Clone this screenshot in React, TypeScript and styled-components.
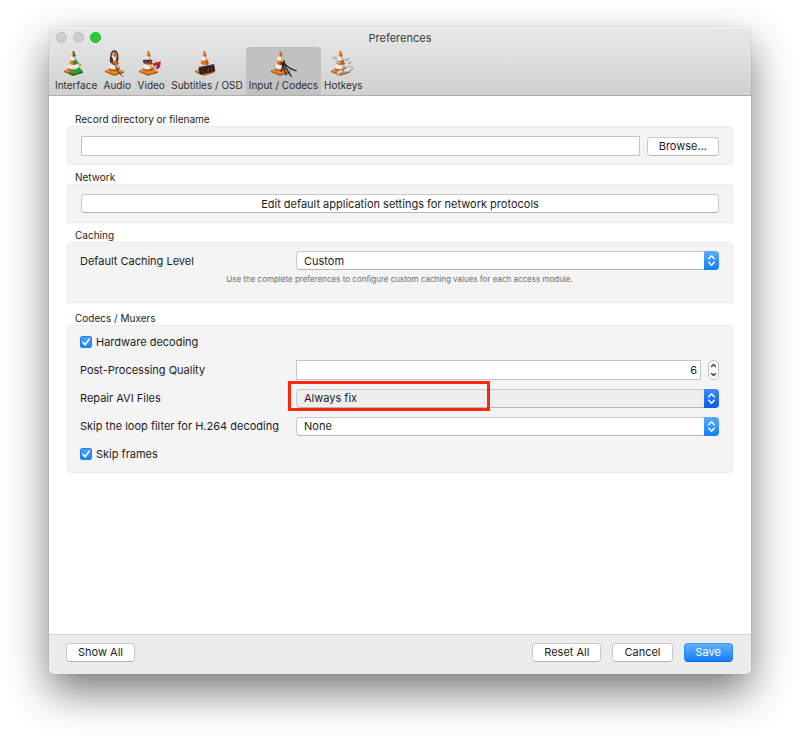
import React, { useState } from "react";
import styled, { createGlobalStyle, css } from "styled-components";

const GlobalStyle = createGlobalStyle`
  *, *::before, *::after { box-sizing: border-box; }
  body { margin: 0; background: #fff; }
  button, input, select { font: inherit; color: inherit; margin: 0; }
`;

const Page = styled.div`
  display: flex;
  min-height: 100vh;
  padding: 27px 49px 70px;
  font-family: Inter, "Liberation Sans", sans-serif;
  font-size: 11px;
  line-height: 14px;
  color: #1c1c1c;
`;

const Window = styled.main`
  flex: 1;
  min-width: 0;
  display: flex;
  flex-direction: column;
  border-radius: 5px;
  background: #fff;
  box-shadow: 0 0 1px rgba(0, 0, 0, 0.45), 0 18px 42px rgba(0, 0, 0, 0.52);
`;

const Header = styled.header`
  border-bottom: 1px solid #aeaeae;
  border-radius: 5px 5px 0 0;
  background: linear-gradient(#e9e9e9, #d0d0d0);
  box-shadow: inset 0 1px #f5f5f5;
`;

const TitleBar = styled.div`
  display: grid;
  grid-template-columns: 1fr auto 1fr;
  align-items: center;
  height: 20px;
  padding: 1px 7px 0;
`;

const Lights = styled.div`
  display: flex;
  gap: 6px;
`;

const Light = styled.button<{ $on?: boolean }>`
  width: 11px;
  height: 11px;
  padding: 0;
  border-radius: 50%;
  border: 1px solid ${(p) => (p.$on ? "#20b032" : "#bdbdbd")};
  background: ${(p) => (p.$on ? "#28cb3d" : "#cecece")};
`;

const Title = styled.h1`
  margin: 0;
  font-size: 11px;
  font-weight: 400;
  color: #3a3a3a;
`;

const Toolbar = styled.nav`
  display: flex;
  height: 48px;
  padding-left: 3px;
`;

const Tool = styled.button<{ $active?: boolean }>`
  display: flex;
  flex-direction: column;
  align-items: center;
  padding: 1px 3px 0;
  border: 0;
  border-radius: 4px 4px 0 0;
  background: ${(p) => (p.$active ? "#c1c1c1" : "transparent")};
  font-size: 10px;
  line-height: 16px;
  white-space: nowrap;
  color: #2c2c2c;
  svg { display: block; flex: none; }
`;

const Content = styled.div`
  flex: 1;
  padding: 17px 18px;
`;

const Group = styled.fieldset<{ $gap: number }>`
  min-width: 0;
  margin: 0 0 ${(p) => p.$gap}px;
  padding: 0;
  border: 0;
`;

const Legend = styled.legend`
  padding: 0 8px;
  font-size: 10px;
  line-height: 13px;
`;

const Panel = styled.div<{ $pad: string }>`
  border: 1px solid #ebebeb;
  border-radius: 3px;
  background: #f4f4f4;
  padding: ${(p) => p.$pad};
`;

const Line = styled.div`
  display: flex;
  align-items: center;
  gap: 7px;
`;

const FormRow = styled.div<{ $height: number }>`
  position: relative;
  display: grid;
  grid-template-columns: 216px minmax(0, 1fr);
  align-items: center;
  height: ${(p) => p.$height}px;
`;

const field = css`
  flex: 1;
  min-width: 0;
  height: 20px;
  border: 1px solid #c4c4c4;
  background: #fff;
  outline: 0;
`;

const TextField = styled.input`
  ${field}
  padding: 0 4px;
`;

const NumberField = styled.input`
  ${field}
  padding: 0 3px;
  text-align: right;
`;

const Button = styled.button<{ $primary?: boolean; $wide?: boolean }>`
  height: 19px;
  padding: 0 11px;
  border: 1px solid #c9c9c9;
  border-bottom-color: #b5b5b5;
  border-radius: 4px;
  background: #fff;
  line-height: 16px;
  white-space: nowrap;
  ${(p) => p.$wide && "flex: 1;"}
  ${(p) =>
    p.$primary &&
    css`
      border-color: #3c94f5 #2a86f0 #0f6be0;
      background: linear-gradient(#62b0fb, #157efb);
      color: #fff;
    `}
`;

const SelectBox = styled.div<{ $pressed?: boolean }>`
  display: flex;
  position: relative;
  height: 19px;
  border: 1px solid #c9c9c9;
  border-bottom-color: #b5b5b5;
  border-radius: 4px;
  background: ${(p) => (p.$pressed ? "#eeeeee" : "#fff")};
  select {
    flex: 1;
    min-width: 0;
    appearance: none;
    border: 0;
    outline: 0;
    padding: 0 20px 0 7px;
    background: transparent;
    line-height: 16px;
  }
`;

const Arrows = styled.span<{ $pressed?: boolean }>`
  position: absolute;
  top: -1px;
  right: -1px;
  bottom: -1px;
  width: 15px;
  display: grid;
  place-items: center;
  border-radius: 0 4px 4px 0;
  pointer-events: none;
  background: ${(p) =>
    p.$pressed
      ? "linear-gradient(#3a8cf5, #0a5ce8)"
      : "linear-gradient(#5aabfb, #157efb)"};
`;

const Hint = styled.p`
  margin: 3px 0 0;
  font-size: 8px;
  line-height: 12px;
  text-align: center;
  color: #6e6e6e;
`;

const CheckLabel = styled.label`
  display: flex;
  align-items: center;
  gap: 4px;
  height: 28px;
`;

const CheckFrame = styled.span`
  display: grid;
  width: 12px;
  height: 12px;
  > * { grid-area: 1 / 1; pointer-events: none; }
  input {
    appearance: none;
    pointer-events: auto;
    width: 12px;
    height: 12px;
    border: 1px solid #bdbdbd;
    border-radius: 2px;
    background: #fff;
  }
  input:checked {
    border-color: #2382f3;
    background: linear-gradient(#4ca2fb, #1c80fa);
  }
  input:not(:checked) + svg { display: none; }
`;

const Stepper = styled.div`
  display: flex;
  flex-direction: column;
  width: 11px;
  height: 20px;
  border: 1px solid #c2c2c2;
  border-radius: 5px;
  background: #fff;
  button {
    flex: 1;
    display: grid;
    place-items: center;
    min-height: 0;
    padding: 0;
    border: 0;
    background: transparent;
  }
`;

const Highlight = styled.div`
  position: absolute;
  left: 208px;
  top: -3px;
  width: 202px;
  height: 30px;
  border: 3px solid #fb2a0e;
  pointer-events: none;
`;

const Footer = styled.footer`
  display: flex;
  align-items: center;
  gap: 11px;
  height: 40px;
  padding: 0 18px 5px 17px;
  border-top: 1px solid #cfcfcf;
  border-radius: 0 0 5px 5px;
  background: #ececec;
`;

const Spacer = styled.div`
  flex: 1;
`;

type Kind = "interface" | "audio" | "video" | "subtitles" | "input" | "hotkeys";

const extras: Record<Kind, React.ReactNode> = {
  interface: (
    <>
      <path d="M37 9h2l5 15-7 3z" fill="#147a28" />
      <path d="M37 39l10-4 4 12-14 5z" fill="#1c9434" />
      <path d="M37 58l14-4 15 16-30 9-12-6 13-6z" fill="#1ea534" />
      <path d="M24 73l12 6 30-9v4l-30 9-12-6z" fill="#0b6d1b" />
      <path d="M37 52l14-4 2 9c-4 6-10 8-16 7z" fill="#e4ece5" />
      <path d="M50 43l14 8-6-1 4 8-8-7z" fill="#f07d20" />
    </>
  ),
  audio: (
    <>
      <path d="M27 36C22 0 50 0 47 32" fill="none" stroke="#26262c" strokeWidth="4" />
      <path d="M29 22C31 10 42 10 44 20" fill="none" stroke="#888893" strokeWidth="2" />
      <ellipse cx="28" cy="36" rx="5" ry="8" fill="#1d1d22" />
      <ellipse cx="28" cy="36" rx="2" ry="4" fill="#5a5a64" />
      <ellipse cx="46" cy="34" rx="3" ry="7" fill="#35353d" />
      <path d="M29 44q8 4 11 8l8 18 14 16" fill="none" stroke="#38383e" strokeWidth="3" />
    </>
  ),
  video: (
    <>
      <path d="M21 36q14-4 29 1l-1 9-10 1-4-4-4 4-9-2z" fill="#4a2024" />
      <path d="M25 38l8-1-1 6-6 1z" fill="#3c5fa8" />
      <path d="M39 38l8 1-1 6-7-1z" fill="#cf3a2a" />
      <path d="M49 37l9-4 4 5 11-2 1 6-18 6-7-3z" fill="#d6d2da" />
      <path d="M50 47l13-5 11-3-1 15-6 9-13-2z" fill="#c91f2c" />
      <path d="M51 52l6 8 5-8M65 42l6-4" fill="none" stroke="#fff" strokeWidth="3" />
      <path d="M63 50l6 3-5 7" fill="none" stroke="#5a1d4b" strokeWidth="3" />
    </>
  ),
  subtitles: (
    <>
      <path d="M20 57l46-8 4 21-47 10z" fill="#211a1c" />
      <path d="M20 57l46-8 1 3-46 9z" fill="#5c5454" />
      <path d="M28 65l3 10M37 63l-4 1 2 9 4-1M44 61l2 10M52 60l-4 1 2 9 4-1M60 58l-4 1 1 5 5-1 1 5-5 1" fill="none" stroke="#92342e" strokeWidth="2.4" />
    </>
  ),
  input: (
    <>
      <path d="M41 41c5 12 3 21-3 30M43 40c8 14 2 28 13 42M45 41c10 11 9 28 26 45M45 42c13 14 18 20 41 27" fill="none" stroke="#211d1d" strokeWidth="3.6" />
      <path d="M48 50c9 12 11 15 20 19" fill="none" stroke="#77706c" strokeWidth="1.5" />
      <path d="M36 43l3 8" stroke="#d11a25" strokeWidth="5" />
      <path d="M42 34l2 8" stroke="#f3c414" strokeWidth="5" />
      <path d="M48 37l1 8" stroke="#353336" strokeWidth="5" />
    </>
  ),
  hotkeys: (
    <>
      <path d="M12 27l9-1 7 6-8 1zM48 31l7 4 8-5-5 8-7-2zM24 43l11-2 5 4-9 3zM56 43l6 2 8-4-6 7z" fill="#a5a5a6" stroke="#707071" strokeWidth="1" />
      <path d="M14 27l7 1M49 31l6 4M27 44l8-2M57 43l5 2" stroke="#fff" strokeWidth="2" />
      <path d="M27 72l12-7 9 3-8 6-11 9-4-4zM42 66l13-5 6-7 13 5-2 8-11 6-15 1z" fill="#bdbdbd" stroke="#808080" strokeWidth="1.5" />
      <path d="M28 72l11-5 4 2-9 5zM46 67l11-4 5-6 8 3-5 4-10 5z" fill="#efefef" />
    </>
  ),
};

const ConeIcon = ({ kind }: { kind: Kind }) => (
  <svg width="28" height="29" viewBox="3 0 84 87" aria-hidden="true">
    <path d="M9 68l27-12 30 14-30 9z" fill="#e8842a" />
    <path d="M9 68l27 11 30-9v4l-30 9L9 72z" fill="#a64e0a" />
    <path d="M35 9h4l14 50c-3 10-25 12-32 3z" fill="#eeece6" />
    <path d="M35 9h4l5 15q-7 4-13 0z" fill="#dc741a" />
    <path d="M28 36q9 5 19-1l4 12q-13 8-26 1z" fill="#dc741a" />
    <path d="M21 60q15 8 32-2l1 5c-3 9-26 11-34 2z" fill="#c9640f" />
    <path d="M38 9h1l14 50q-4 8-11 9z" fill="#743500" opacity=".3" />
    <path d="M35 14L25 58" stroke="#fff" strokeWidth="2.5" opacity=".4" />
    {extras[kind]}
  </svg>
);

const UpDown = () => (
  <svg width="9" height="13" viewBox="0 0 9 13" fill="none" stroke="#fff" strokeWidth="1.4" strokeLinecap="round" strokeLinejoin="round" aria-hidden="true">
    <path d="M1.8 4.8l2.7-3 2.7 3M1.8 8.2l2.7 3 2.7-3" />
  </svg>
);

const Chevron = ({ down }: { down?: boolean }) => (
  <svg width="7" height="5" viewBox="0 0 7 5" fill="none" stroke="#3b3b3b" strokeWidth="1.3" strokeLinecap="round" aria-hidden="true">
    <path d={down ? "M1.5 1.5l2 2 2-2" : "M1.5 3.5l2-2 2 2"} />
  </svg>
);

const PopUp = ({ id, value, options, pressed }: { id: string; value: string; options: string[]; pressed?: boolean }) => (
  <SelectBox $pressed={pressed}>
    <select id={id} defaultValue={value}>
      {options.map((o) => (
        <option key={o}>{o}</option>
      ))}
    </select>
    <Arrows $pressed={pressed}>
      <UpDown />
    </Arrows>
  </SelectBox>
);

const Check = ({ children }: { children: React.ReactNode }) => (
  <CheckLabel>
    <CheckFrame>
      <input type="checkbox" defaultChecked />
      <svg width="12" height="12" viewBox="0 0 12 12" fill="none" stroke="#fff" strokeWidth="1.6" strokeLinecap="round" strokeLinejoin="round" aria-hidden="true">
        <path d="M3 6.4l2.2 2.5L9 3.2" />
      </svg>
    </CheckFrame>
    {children}
  </CheckLabel>
);

const tools: { kind: Kind; label: string }[] = [
  { kind: "interface", label: "Interface" },
  { kind: "audio", label: "Audio" },
  { kind: "video", label: "Video" },
  { kind: "subtitles", label: "Subtitles / OSD" },
  { kind: "input", label: "Input / Codecs" },
  { kind: "hotkeys", label: "Hotkeys" },
];

export default function App() {
  const [active, setActive] = useState<Kind>("input");
  const [quality, setQuality] = useState(6);

  return (
    <>
      <GlobalStyle />
      <Page>
        <Window>
          <Header>
            <TitleBar>
              <Lights>
                <Light aria-label="Close" />
                <Light aria-label="Minimize" />
                <Light aria-label="Zoom" $on />
              </Lights>
              <Title>Preferences</Title>
            </TitleBar>
            <Toolbar>
              {tools.map((t) => (
                <Tool key={t.kind} $active={t.kind === active} onClick={() => setActive(t.kind)}>
                  <ConeIcon kind={t.kind} />
                  {t.label}
                </Tool>
              ))}
            </Toolbar>
          </Header>

          <Content>
            <Group $gap={6}>
              <Legend>Record directory or filename</Legend>
              <Panel $pad="9px 13px 8px">
                <Line>
                  <TextField aria-label="Record directory or filename" />
                  <Button>Browse...</Button>
                </Line>
              </Panel>
            </Group>

            <Group $gap={6}>
              <Legend>Network</Legend>
              <Panel $pad="9px 13px 9px">
                <Line>
                  <Button $wide>Edit default application settings for network protocols</Button>
                </Line>
              </Panel>
            </Group>

            <Group $gap={9}>
              <Legend>Caching</Legend>
              <Panel $pad="8px 13px 17px 12px">
                <FormRow $height={19}>
                  <label htmlFor="caching">Default Caching Level</label>
                  <PopUp id="caching" value="Custom" options={["Custom", "Lowest latency", "Normal"]} />
                </FormRow>
                <Hint>Use the complete preferences to configure custom caching values for each access module.</Hint>
              </Panel>
            </Group>

            <Group $gap={0}>
              <Legend>Codecs / Muxers</Legend>
              <Panel $pad="2px 13px 4px 12px">
                <Check>Hardware decoding</Check>
                <FormRow $height={28}>
                  <label htmlFor="quality">Post-Processing Quality</label>
                  <Line>
                    <NumberField
                      id="quality"
                      inputMode="numeric"
                      value={quality}
                      onChange={(e) => setQuality(Number(e.target.value) || 0)}
                    />
                    <Stepper>
                      <button aria-label="Increase" onClick={() => setQuality(quality + 1)}>
                        <Chevron />
                      </button>
                      <button aria-label="Decrease" onClick={() => setQuality(Math.max(0, quality - 1))}>
                        <Chevron down />
                      </button>
                    </Stepper>
                  </Line>
                </FormRow>
                <FormRow $height={28}>
                  <label htmlFor="repair">Repair AVI Files</label>
                  <PopUp id="repair" value="Always fix" options={["Ask for action", "Always fix", "Never fix"]} pressed />
                  <Highlight />
                </FormRow>
                <FormRow $height={28}>
                  <label htmlFor="loop">Skip the loop filter for H.264 decoding</label>
                  <PopUp id="loop" value="None" options={["None", "Non-ref", "All"]} />
                </FormRow>
                <Check>Skip frames</Check>
              </Panel>
            </Group>
          </Content>

          <Footer>
            <Button>Show All</Button>
            <Spacer />
            <Button>Reset All</Button>
            <Button>Cancel</Button>
            <Button $primary>Save</Button>
          </Footer>
        </Window>
      </Page>
    </>
  );
}
